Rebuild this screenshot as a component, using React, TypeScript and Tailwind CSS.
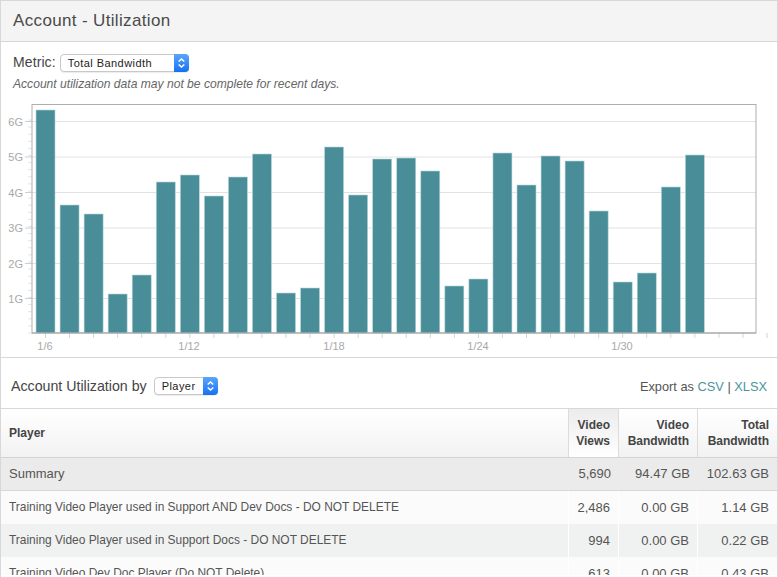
const bars = [
  110, 205, 214, 294, 275, 182, 175, 196, 177, 154, 293, 288, 147, 195, 159, 158, 171, 286, 279, 153,
  185, 156, 161, 211, 282, 273, 187, 155,
];
const gridLines = [121.5, 157, 192.5, 228, 263.5, 298.5];
const yLabels = ["6G", "5G", "4G", "3G", "2G", "1G"];
const xLabels = [
  { x: 45, text: "1/6" },
  { x: 189, text: "1/12" },
  { x: 334, text: "1/18" },
  { x: 478, text: "1/24" },
  { x: 622, text: "1/30" },
];

const rows = [
  { name: "Training Video Player used in Support AND Dev Docs - DO NOT DELETE", views: "2,486", video: "0.00 GB", total: "1.14 GB" },
  { name: "Training Video Player used in Support Docs - DO NOT DELETE", views: "994", video: "0.00 GB", total: "0.22 GB" },
  { name: "Training Video Dev Doc Player (Do NOT Delete)", views: "613", video: "0.00 GB", total: "0.43 GB" },
];

const columns = "grid grid-cols-[567px_51px_79px_1fr]";

const SelectBox = ({ label, width }: { label: string; width: string }) => (
  <div className={`flex h-[18px] items-stretch rounded-[4px] border border-[#c8c8c8] bg-white shadow-[0_1px_1px_rgba(0,0,0,0.08)] ${width}`}>
    <span className="flex-1 pl-[7px] text-[11px] leading-[16px] tracking-[0.45px] text-[#222]">{label}</span>
    <span className="-my-px -mr-px flex w-[15px] items-center justify-center rounded-r-[4px] bg-gradient-to-b from-[#5aa5fb] to-[#1470f0]">
      <svg width="9" height="12" viewBox="0 0 9 12" fill="none" stroke="white" strokeWidth="1.4">
        <path d="M1.7 4.6 4.5 1.9 7.3 4.6" />
        <path d="M1.7 7.4 4.5 10.1 7.3 7.4" />
      </svg>
    </span>
  </div>
);

const Chart = () => (
  <svg width="776" height="258" viewBox="0 0 776 258" className="block">
    {/* coordinates here are page coords shifted up by 100 */}
    <g transform="translate(-1 -100)">
      {gridLines.map((y) => (
        <line key={y} x1="32" x2="756" y1={y} y2={y} stroke="#e2e2e2" strokeWidth="1" />
      ))}
      {Array.from({ length: 31 }).map((_, i) => {
        const y = 333 - i * 7.1;
        return y > 106 ? <line key={i} x1="28" x2="32" y1={y} y2={y} stroke="#e4e4e4" /> : null;
      })}
      {gridLines.map((y) => (
        <line key={y} x1="25" x2="32" y1={y} y2={y} stroke="#d0d0d0" />
      ))}
      {Array.from({ length: 31 }).map((_, i) => (
        <line key={i} x1={45.5 + i * 24.05} x2={45.5 + i * 24.05} y1="333" y2="338" stroke="#d4d4d4" />
      ))}
      <rect x="32" y="104.5" width="724" height="228.5" fill="none" stroke="#adadad" />
      {bars.map((top, i) => (
        <rect
          key={i}
          x={36 + i * 24.05}
          y={top}
          width="19"
          height={333 - top}
          fill="#498d98"
          stroke="#b9d6da"
          strokeWidth="0.6"
        />
      ))}
      <line x1="32" x2="756" y1="333" y2="333" stroke="#a6a6a6" />
      {gridLines.map((y, i) => (
        <text key={y} x="23" y={y + 4} textAnchor="end" fontSize="11" fill="#a8a8a8" fontFamily="Liberation Sans, sans-serif">
          {yLabels[i]}
        </text>
      ))}
      {xLabels.map((l) => (
        <text key={l.text} x={l.x} y="350" textAnchor="middle" fontSize="11" fill="#a8a8a8" fontFamily="Liberation Sans, sans-serif">
          {l.text}
        </text>
      ))}
    </g>
  </svg>
);

const App = () => {
  return (
    <div className="h-[577px] w-[778px] overflow-hidden bg-white font-['Liberation_Sans',Arial,sans-serif] text-[#444]">
      <div className="relative h-full border-x border-t border-[#d8d8d8]">
        <div className="flex h-[41px] items-center border-b border-[#d6d6d6] bg-[#f4f4f4] pl-3 text-[17px] tracking-[0.35px] text-[#4a4a4a]">
          Account - Utilization
        </div>

        <div className="flex h-[40px] items-center gap-[4px] pl-3 pt-[1px] text-[14px] tracking-[0.1px] text-[#444]">
          <span>Metric:</span>
          <SelectBox label="Total Bandwidth" width="w-[129px]" />
        </div>
        <p className="-mt-[5px] h-[23px] pl-3 text-[12.1px] italic leading-[15px] text-[#666]">
          Account utilization data may not be complete for recent days.
        </p>

        <div className="h-[258px]">
          <Chart />
        </div>

        <div className="-mt-[1px] flex h-[52px] items-center justify-between border-y border-[#d8d8d8] px-[10px] pt-[7px]">
          <div className="flex items-center gap-[7px]">
            <span className="text-[14.2px] text-[#444]">Account Utilization by</span>
            <SelectBox label="Player" width="w-[64px]" />
          </div>
          <div className="text-[12.8px] text-[#555]">
            Export as <a className="text-[#4b949e]">CSV</a> | <a className="text-[#4b949e]">XLSX</a>
          </div>
        </div>

        <div className={`${columns} h-[49px] border-b border-[#d4d4d4] bg-gradient-to-b from-white to-[#f2f2f2] text-[12px] font-bold leading-4 text-[#444]`}>
          <div className="flex items-center pl-2">Player</div>
          <div className="flex items-center justify-end border-x border-[#dcdcdc] bg-gradient-to-b from-[#ececec] to-white pr-2 text-right">
            Video<br />Views
          </div>
          <div className="flex items-center justify-end border-r border-[#dcdcdc] pr-2 text-right">
            Video<br />Bandwidth
          </div>
          <div className="flex items-center justify-end pr-2 text-right">
            Total<br />Bandwidth
          </div>
        </div>

        <div className={`${columns} h-[33px] items-center border-b border-[#d8d8d8] bg-[#ebebeb] text-[13px] text-[#555]`}>
          <div className="pl-2">Summary</div>
          <div className="pr-2 text-right">5,690</div>
          <div className="pr-2 text-right">94.47 GB</div>
          <div className="pr-2 text-right">102.63 GB</div>
        </div>

        {rows.map((row, i) => (
          <div key={row.name} className={`${columns} h-[33px] text-[11.95px] text-[#555] ${i % 2 === 1 ? "bg-[#f0f2f1]" : "bg-[#fbfbfb]"}`}>
            <div className="flex items-center pl-2">{row.name}</div>
            <div className="flex items-center justify-end border-x border-white pr-2 text-[13px]">{row.views}</div>
            <div className="flex items-center justify-end border-r border-white pr-2 text-[13px]">{row.video}</div>
            <div className="flex items-center justify-end pr-2 text-[13px]">{row.total}</div>
          </div>
        ))}

        <div className="absolute inset-x-0 bottom-0 h-[2px] bg-white" />
      </div>
    </div>
  );
};

export default App;
